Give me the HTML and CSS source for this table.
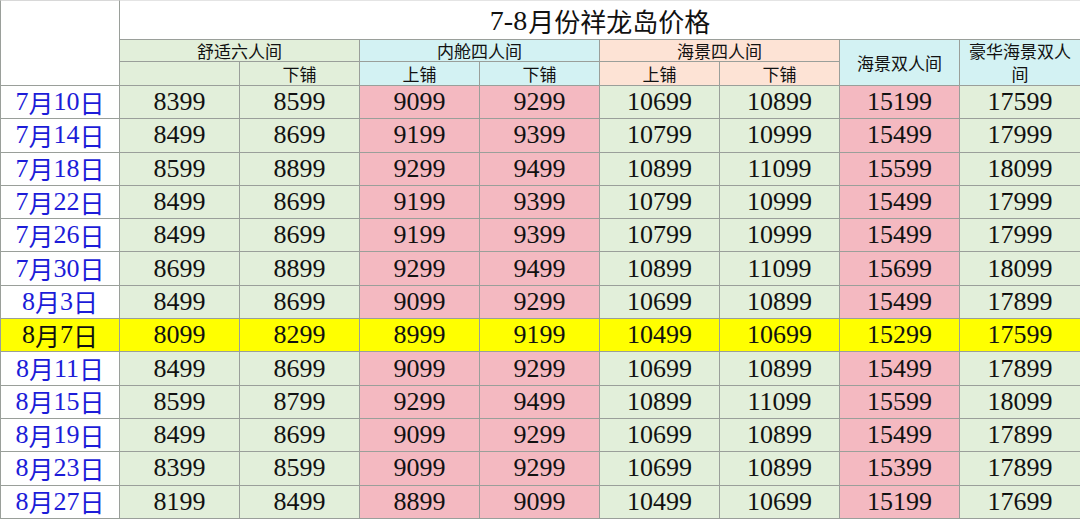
FILE: index.html
```html
<!DOCTYPE html>
<html>
<head>
<meta charset="utf-8">
<title>7-8月份祥龙岛价格</title>
<link rel="stylesheet" href="styles.css">
</head>
<body>
<div class="sheet">
  <div class="cell corner"></div>
  <div class="cell title"><span class="lat">7-8</span>月份祥龙岛价格</div>

  <div class="cell head span2 hg">舒适六人间</div>
  <div class="cell head span2 hc">内舱四人间</div>
  <div class="cell head span2 hp">海景四人间</div>
  <div class="cell head tall hc">海景双人间</div>
  <div class="cell head tall hc last wrap">豪华海景双人间</div>

  <div class="cell sub hg"></div>
  <div class="cell sub hg">下铺</div>
  <div class="cell sub hc">上铺</div>
  <div class="cell sub hc">下铺</div>
  <div class="cell sub hp">上铺</div>
  <div class="cell sub hp">下铺</div>

  <div class="cell date"><span class="lat">7</span>月<span class="lat">10</span>日</div>
  <div class="cell num g">8399</div><div class="cell num g">8599</div><div class="cell num p">9099</div><div class="cell num p">9299</div><div class="cell num g">10699</div><div class="cell num g">10899</div><div class="cell num p">15199</div><div class="cell num g last">17599</div>

  <div class="cell date"><span class="lat">7</span>月<span class="lat">14</span>日</div>
  <div class="cell num g">8499</div><div class="cell num g">8699</div><div class="cell num p">9199</div><div class="cell num p">9399</div><div class="cell num g">10799</div><div class="cell num g">10999</div><div class="cell num p">15499</div><div class="cell num g last">17999</div>

  <div class="cell date"><span class="lat">7</span>月<span class="lat">18</span>日</div>
  <div class="cell num g">8599</div><div class="cell num g">8899</div><div class="cell num p">9299</div><div class="cell num p">9499</div><div class="cell num g">10899</div><div class="cell num g">11099</div><div class="cell num p">15599</div><div class="cell num g last">18099</div>

  <div class="cell date"><span class="lat">7</span>月<span class="lat">22</span>日</div>
  <div class="cell num g">8499</div><div class="cell num g">8699</div><div class="cell num p">9199</div><div class="cell num p">9399</div><div class="cell num g">10799</div><div class="cell num g">10999</div><div class="cell num p">15499</div><div class="cell num g last">17999</div>

  <div class="cell date"><span class="lat">7</span>月<span class="lat">26</span>日</div>
  <div class="cell num g">8499</div><div class="cell num g">8699</div><div class="cell num p">9199</div><div class="cell num p">9399</div><div class="cell num g">10799</div><div class="cell num g">10999</div><div class="cell num p">15499</div><div class="cell num g last">17999</div>

  <div class="cell date"><span class="lat">7</span>月<span class="lat">30</span>日</div>
  <div class="cell num g">8699</div><div class="cell num g">8899</div><div class="cell num p">9299</div><div class="cell num p">9499</div><div class="cell num g">10899</div><div class="cell num g">11099</div><div class="cell num p">15699</div><div class="cell num g last">18099</div>

  <div class="cell date"><span class="lat">8</span>月<span class="lat">3</span>日</div>
  <div class="cell num g">8499</div><div class="cell num g">8699</div><div class="cell num p">9099</div><div class="cell num p">9299</div><div class="cell num g">10699</div><div class="cell num g">10899</div><div class="cell num p">15499</div><div class="cell num g last">17899</div>

  <div class="cell date hl"><span class="lat">8</span>月<span class="lat">7</span>日</div>
  <div class="cell num hl">8099</div><div class="cell num hl">8299</div><div class="cell num hl">8999</div><div class="cell num hl">9199</div><div class="cell num hl">10499</div><div class="cell num hl">10699</div><div class="cell num hl">15299</div><div class="cell num hl last">17599</div>

  <div class="cell date"><span class="lat">8</span>月<span class="lat">11</span>日</div>
  <div class="cell num g">8499</div><div class="cell num g">8699</div><div class="cell num p">9099</div><div class="cell num p">9299</div><div class="cell num g">10699</div><div class="cell num g">10899</div><div class="cell num p">15499</div><div class="cell num g last">17899</div>

  <div class="cell date"><span class="lat">8</span>月<span class="lat">15</span>日</div>
  <div class="cell num g">8599</div><div class="cell num g">8799</div><div class="cell num p">9299</div><div class="cell num p">9499</div><div class="cell num g">10899</div><div class="cell num g">11099</div><div class="cell num p">15599</div><div class="cell num g last">18099</div>

  <div class="cell date"><span class="lat">8</span>月<span class="lat">19</span>日</div>
  <div class="cell num g">8499</div><div class="cell num g">8699</div><div class="cell num p">9099</div><div class="cell num p">9299</div><div class="cell num g">10699</div><div class="cell num g">10899</div><div class="cell num p">15499</div><div class="cell num g last">17899</div>

  <div class="cell date"><span class="lat">8</span>月<span class="lat">23</span>日</div>
  <div class="cell num g">8399</div><div class="cell num g">8599</div><div class="cell num p">9099</div><div class="cell num p">9299</div><div class="cell num g">10699</div><div class="cell num g">10899</div><div class="cell num p">15399</div><div class="cell num g last">17899</div>

  <div class="cell date"><span class="lat">8</span>月<span class="lat">27</span>日</div>
  <div class="cell num g">8199</div><div class="cell num g">8499</div><div class="cell num p">8899</div><div class="cell num p">9099</div><div class="cell num g">10499</div><div class="cell num g">10699</div><div class="cell num p">15199</div><div class="cell num g last">17699</div>
</div>
</body>
</html>
```

FILE: styles.css
```css
html, body {
  margin: 0;
  padding: 0;
  background: #ffffff;
}

.sheet {
  display: grid;
  grid-template-columns: repeat(9, 120px);
  grid-template-rows: 40px 22px 24px repeat(13, 33.3px);
  width: 1080px;
  height: 520px;
  overflow: hidden;
  font-family: "Noto Sans CJK SC", sans-serif;
  color: #111111;
}

.cell {
  box-sizing: border-box;
  border-right: 1px solid #9a9f9a;
  border-bottom: 1px solid #9a9f9a;
  display: flex;
  align-items: center;
  justify-content: center;
  text-align: center;
  white-space: nowrap;
}

.cell.last {
  border-right: none;
}

.sheet .cell.num,
.sheet .lat {
  font-family: "Liberation Serif", "Times New Roman", serif;
}

.corner {
  grid-row: span 3;
  border-left: 1px solid #9a9f9a;
  border-top: 1px solid #d8d8d8;
  background: #ffffff;
}

.title {
  grid-column: span 8;
  border-right: none;
  border-top: 1px solid #e4e4e4;
  background: #ffffff;
  font-size: 26px;
  line-height: 1;
  padding-top: 2px;
}

.title .lat {
  font-size: 28px;
  margin-right: 1px;
}

.head {
  font-size: 17px;
  line-height: 1.15;
}

.span2 {
  grid-column: span 2;
}

.tall {
  grid-row: span 2;
}

.wrap {
  white-space: normal;
  padding: 0 6px;
  line-height: 1.3;
}

.sub {
  font-size: 17px;
  line-height: 1;
}

.hg { background: #e2efda; }
.hc { background: #d3f2f3; }
.hp { background: #fde3d5; }

.date {
  border-left: 1px solid #9a9f9a;
  background: #ffffff;
  color: #1c1cd8;
  font-size: 25px;
  line-height: 1;
}

.date .lat {
  font-size: 26px;
}

.num {
  font-size: 26px;
  line-height: 1;
}

.g { background: #e2efda; }
.p { background: #f4b9c1; }

.hl {
  background: #ffff00;
  color: #111111;
}
```
